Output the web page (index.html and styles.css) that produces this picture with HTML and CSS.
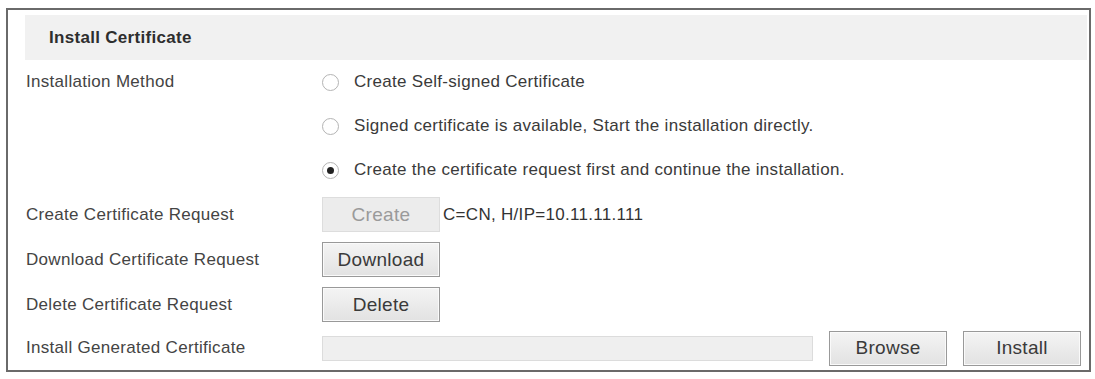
FILE: index.html
```html
<!DOCTYPE html>
<html lang="en">
<head>
    <meta charset="UTF-8">
    <title>Install Certificate</title>
    <link rel="stylesheet" href="styles.css">
</head>
<body>
    <div class="panel">
        <div class="panel-title">Install Certificate</div>
        <div class="row">
            <label class="row-label">Installation Method</label>
            <label class="option"><input type="radio" name="method"> Create Self-signed Certificate</label>
        </div>
        <div class="row">
            <span class="row-label"></span>
            <label class="option"><input type="radio" name="method"> Signed certificate is available, Start the installation directly.</label>
        </div>
        <div class="row">
            <span class="row-label"></span>
            <label class="option"><input type="radio" name="method" checked> Create the certificate request first and continue the installation.</label>
        </div>
        <div class="row row-btn">
            <span class="row-label">Create Certificate Request</span>
            <button type="button" class="btn" disabled>Create</button>
            <span class="req-info">C=CN, H/IP=10.11.11.111</span>
        </div>
        <div class="row row-btn">
            <span class="row-label">Download Certificate Request</span>
            <button type="button" class="btn">Download</button>
        </div>
        <div class="row row-btn">
            <span class="row-label">Delete Certificate Request</span>
            <button type="button" class="btn">Delete</button>
        </div>
        <div class="row row-last">
            <span class="row-label">Install Generated Certificate</span>
            <input type="text" class="file-path" readonly>
            <button type="button" class="btn btn-browse">Browse</button>
            <button type="button" class="btn">Install</button>
        </div>
    </div>
</body>
</html>
```

FILE: styles.css
```css
body {
    margin: 0;
    background-color: #fff;
    font-family: "Liberation Sans", Arial, sans-serif;
    letter-spacing: 0.3px;
    color: #3c3c3c;
}
.panel {
    margin: 8px 0 0 6px;
    width: 1085px;
    height: 364px;
    box-sizing: border-box;
    border: 2px solid #6a6a6a;
    padding: 5px 2px 0 17px;
}
.panel-title {
    height: 45px;
    line-height: 45px;
    padding-left: 24px;
    background-color: #f1f1f1;
    font-size: 17px;
    font-weight: bold;
    color: #2e2e2e;
}
.row {
    display: flex;
    align-items: center;
    height: 44px;
    padding-left: 1px;
    font-size: 17px;
}
.row-btn {
    height: 45px;
}
.row-last {
    height: 42px;
}
.row-label {
    width: 296px;
    flex: none;
    color: #444;
}
.option {
    display: flex;
    align-items: center;
    color: #3a3a3a;
}
.option input {
    appearance: none;
    -webkit-appearance: none;
    width: 17px;
    height: 17px;
    margin: 0 15px 0 0;
    border: 1px solid #b4b4b4;
    border-radius: 50%;
    background-color: #fff;
    box-sizing: border-box;
    display: grid;
    place-items: center;
}
.option input:checked::after {
    content: "";
    width: 7px;
    height: 7px;
    border-radius: 50%;
    background-color: #222;
}
.btn {
    width: 118px;
    height: 35px;
    padding: 0;
    font-family: inherit;
    font-size: 19px;
    letter-spacing: 0.3px;
    color: #3a3a3a;
    background: linear-gradient(#f4f4f4, #e2e2e2);
    border: 1px solid #999;
    box-shadow: inset 0 0 0 1px #fafafa;
}
.btn:disabled {
    color: #9a9a9a;
    background: #ececec;
    border-color: #ddd;
    box-shadow: none;
}
.req-info {
    margin-left: 3px;
    color: #333;
}
.file-path {
    width: 491px;
    height: 25px;
    margin: 0 16px 0 0;
    box-sizing: border-box;
    border: 1px solid #dcdcdc;
    background-color: #efefef;
}
.btn-browse {
    margin-right: 16px;
}
```
